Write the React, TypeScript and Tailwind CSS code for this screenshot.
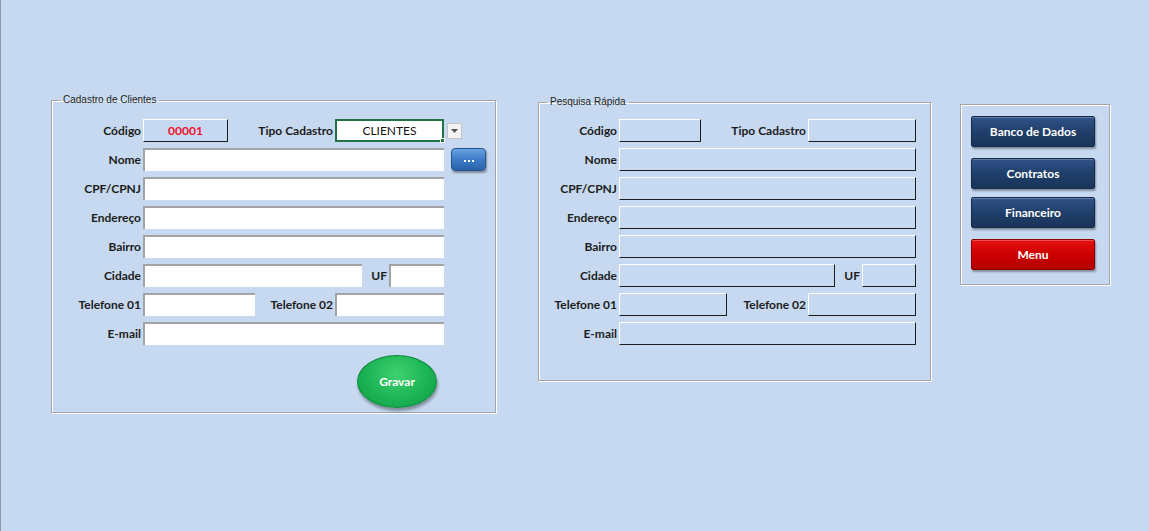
import type { ReactNode } from "react";

const labelCls = "text-[12px] font-bold text-[#1c1c1c] text-right whitespace-nowrap leading-[23px]";

function Label({ w, children }: { w: number; children: ReactNode }) {
  return (
    <div className={labelCls} style={{ width: w }}>
      {children}
    </div>
  );
}

// white input with sunken top/left edge (left form)
function WhiteBox({ w }: { w: number }) {
  return <div className="h-[23px] bg-white border-t-2 border-l-2 border-[#a3a3a3]" style={{ width: w }} />;
}

// flat box with white top/left and dark bottom/right (right form + código)
function BlueBox({ w, children }: { w: number; children?: ReactNode }) {
  return (
    <div
      className="h-[23px] bg-[#c6d9f0] border border-t-white border-l-white border-b-[#1d1d1d] border-r-[#1d1d1d] flex items-center justify-center"
      style={{ width: w }}
    >
      {children}
    </div>
  );
}

function Row({ children }: { children: ReactNode }) {
  return <div className="flex items-center gap-[2px] h-[23px]">{children}</div>;
}

function GroupBox({ title, className, children }: { title: string; className: string; children: ReactNode }) {
  return (
    <fieldset
      className={`border border-[#a5a5a5] shadow-[inset_1px_1px_0_#fff,1px_1px_0_#fff] ${className}`}
    >
      <legend className="ml-[8px] px-[3px] text-[10px] leading-[12px] text-[#222] font-['Liberation_Sans',sans-serif]">
        {title}
      </legend>
      {children}
    </fieldset>
  );
}

function NavyButton({ children, red }: { children: ReactNode; red?: boolean }) {
  return (
    <button
      type="button"
      className={`w-[124px] h-[31px] text-[12px] font-bold text-white rounded-[2px] border ${
        red
          ? "bg-gradient-to-b from-[#e81212] via-[#cc0000] to-[#b30000] border-[#8a0000]"
          : "bg-gradient-to-b from-[#30538a] via-[#203f6b] to-[#1a3459] border-[#142a4a]"
      } shadow-[1px_2px_2px_rgba(0,0,0,0.35),inset_0_1px_0_rgba(255,255,255,0.25)]`}
    >
      {children}
    </button>
  );
}

export default function App() {
  return (
    <div className="h-screen w-full bg-[#c6d9f0] border-l border-[#8e99a8] font-['Lato',sans-serif] flex items-start pl-[50px] pt-[94px]">
      {/* Cadastro de Clientes */}
      <GroupBox title="Cadastro de Clientes" className="w-[445px] h-[319px] pt-[13px]">
        <div className="flex flex-col gap-[6px]">
          <Row>
            <Label w={89}>Código</Label>
            <BlueBox w={85}>
              <span className="text-[12px] font-bold text-[#f0102a] leading-none">00001</span>
            </BlueBox>
            <Label w={103}>Tipo Cadastro</Label>
            <div className="relative w-[109px] h-[23px] bg-white border-2 border-[#217346] flex items-center justify-center text-[12px] text-[#111]">
              CLIENTES
              <span className="absolute -right-[3px] -bottom-[3px] w-[5px] h-[5px] bg-[#217346] border border-white" />
            </div>
            <div className="ml-[1px] w-[15px] h-[16px] bg-[#f3f3f3] border border-[#c4c4c4] flex items-center justify-center">
              <svg width="7" height="4" viewBox="0 0 7 4">
                <path d="M0 0h7L3.5 4z" fill="#555" />
              </svg>
            </div>
          </Row>
          <Row>
            <Label w={89}>Nome</Label>
            <WhiteBox w={301} />
            <button
              type="button"
              className="ml-[5px] w-[35px] h-[23px] rounded-[4px] bg-gradient-to-b from-[#6aa3e0] via-[#3d7cc9] to-[#2a62a8] border border-[#24558f] shadow-[1px_2px_2px_rgba(0,0,0,0.35)] flex items-center justify-center gap-[2px] pt-[3px]"
            >
              <span className="w-[2px] h-[2px] bg-white" />
              <span className="w-[2px] h-[2px] bg-white" />
              <span className="w-[2px] h-[2px] bg-white" />
            </button>
          </Row>
          <Row>
            <Label w={89}>CPF/CPNJ</Label>
            <WhiteBox w={301} />
          </Row>
          <Row>
            <Label w={89}>Endereço</Label>
            <WhiteBox w={301} />
          </Row>
          <Row>
            <Label w={89}>Bairro</Label>
            <WhiteBox w={301} />
          </Row>
          <Row>
            <Label w={89}>Cidade</Label>
            <WhiteBox w={219} />
            <Label w={23}>UF</Label>
            <WhiteBox w={55} />
          </Row>
          <Row>
            <Label w={89}>Telefone 01</Label>
            <WhiteBox w={112} />
            <Label w={76}>Telefone 02</Label>
            <WhiteBox w={109} />
          </Row>
          <Row>
            <Label w={89}>E-mail</Label>
            <WhiteBox w={301} />
          </Row>
        </div>
        <div className="pl-[305px] mt-[10px]">
          <button
            type="button"
            className="w-[80px] h-[53px] rounded-[50%] bg-[radial-gradient(ellipse_at_50%_35%,#3fd16f_0%,#1cb455_55%,#0e9a43_100%)] border border-[#0d8a3c] shadow-[1px_3px_3px_rgba(0,0,0,0.35)] text-white text-[12px] font-bold"
          >
            Gravar
          </button>
        </div>
      </GroupBox>

      {/* Pesquisa Rápida */}
      <GroupBox title="Pesquisa Rápida" className="ml-[42px] mt-[2px] w-[393px] h-[285px] pt-[11px]">
        <div className="flex flex-col gap-[6px]">
          <Row>
            <Label w={78}>Código</Label>
            <BlueBox w={82} />
            <Label w={103}>Tipo Cadastro</Label>
            <BlueBox w={108} />
          </Row>
          <Row>
            <Label w={78}>Nome</Label>
            <BlueBox w={297} />
          </Row>
          <Row>
            <Label w={78}>CPF/CPNJ</Label>
            <BlueBox w={297} />
          </Row>
          <Row>
            <Label w={78}>Endereço</Label>
            <BlueBox w={297} />
          </Row>
          <Row>
            <Label w={78}>Bairro</Label>
            <BlueBox w={297} />
          </Row>
          <Row>
            <Label w={78}>Cidade</Label>
            <BlueBox w={216} />
            <Label w={23}>UF</Label>
            <BlueBox w={54} />
          </Row>
          <Row>
            <Label w={78}>Telefone 01</Label>
            <BlueBox w={108} />
            <Label w={77}>Telefone 02</Label>
            <BlueBox w={108} />
          </Row>
          <Row>
            <Label w={78}>E-mail</Label>
            <BlueBox w={297} />
          </Row>
        </div>
      </GroupBox>

      {/* Botões */}
      <div className="ml-[29px] mt-[10px] w-[150px] h-[181px] border border-[#a5a5a5] shadow-[inset_1px_1px_0_#fff,1px_1px_0_#fff] pt-[11px] pl-[10px] flex flex-col">
        <NavyButton>Banco de Dados</NavyButton>
        <div className="mt-[11px]">
          <NavyButton>Contratos</NavyButton>
        </div>
        <div className="mt-[8px]">
          <NavyButton>Financeiro</NavyButton>
        </div>
        <div className="mt-[11px]">
          <NavyButton red>Menu</NavyButton>
        </div>
      </div>
    </div>
  );
}
